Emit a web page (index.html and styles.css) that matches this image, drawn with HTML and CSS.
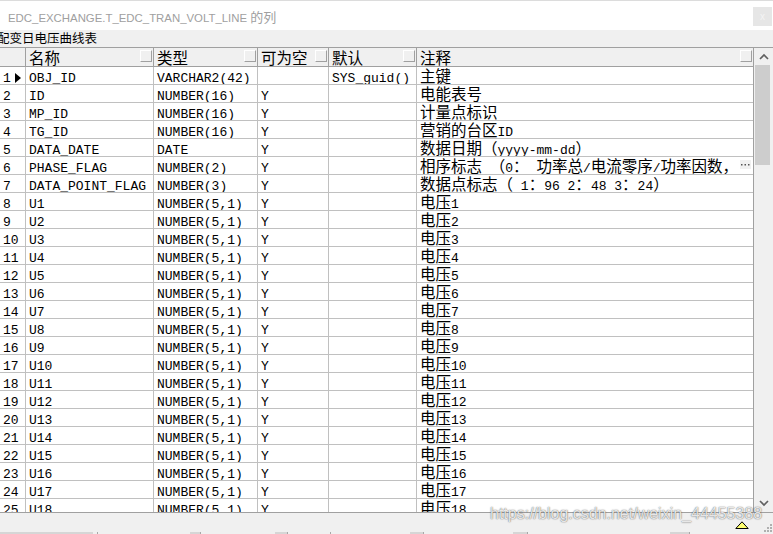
FILE: index.html
```html
<!DOCTYPE html>
<html>
<head>
<meta charset="utf-8">
<link rel="stylesheet" href="styles.css">
</head>
<body>
<div class="titlebar">
  <div class="title">EDC_EXCHANGE.T_EDC_TRAN_VOLT_LINE <span class="zh">的列</span></div>
  <div class="close">x</div>
</div>
<div class="caption">配变日电压曲线表</div>
<div class="gridwrap">
  <div class="table">
    <div class="h"></div>
    <div class="h"><span class="t">名称</span><span class="b"></span></div>
    <div class="h"><span class="t">类型</span><span class="b"></span></div>
    <div class="h"><span class="t">可为空</span><span class="b"></span></div>
    <div class="h"><span class="t">默认</span><span class="b"></span></div>
    <div class="h"><span class="t">注释</span><span class="b"></span></div>

    <div class="c n">1<svg class="cur" width="6" height="10" viewBox="0 0 6 10"><polygon points="0,0 6,5 0,10" fill="#000"/></svg></div><div class="c">OBJ_ID</div><div class="c">VARCHAR2(42)</div><div class="c"></div><div class="c">SYS_guid()</div><div class="c"><span class="z">主键</span></div>
    <div class="c n">2</div><div class="c">ID</div><div class="c">NUMBER(16)</div><div class="c">Y</div><div class="c"></div><div class="c"><span class="z">电能表号</span></div>
    <div class="c n">3</div><div class="c">MP_ID</div><div class="c">NUMBER(16)</div><div class="c">Y</div><div class="c"></div><div class="c"><span class="z">计量点标识</span></div>
    <div class="c n">4</div><div class="c">TG_ID</div><div class="c">NUMBER(16)</div><div class="c">Y</div><div class="c"></div><div class="c"><span class="z">营销的台区</span>ID</div>
    <div class="c n">5</div><div class="c">DATA_DATE</div><div class="c">DATE</div><div class="c">Y</div><div class="c"></div><div class="c"><span class="z">数据日期（</span>yyyy-mm-dd<span class="z">）</span></div>
    <div class="c n">6</div><div class="c">PHASE_FLAG</div><div class="c">NUMBER(2)</div><div class="c">Y</div><div class="c"></div><div class="c"><span class="z">相序标志　（</span>0<span class="z">：</span> <span class="z">功率总</span>/<span class="z">电流零序</span>/<span class="z">功率因数，</span><span class="more"><svg width="9" height="3" viewBox="0 0 9 3"><rect x="0" y="1" width="1.5" height="1.5" fill="#555"/><rect x="3.5" y="1" width="1.5" height="1.5" fill="#555"/><rect x="7" y="1" width="1.5" height="1.5" fill="#555"/></svg></span></div>
    <div class="c n">7</div><div class="c">DATA_POINT_FLAG</div><div class="c">NUMBER(3)</div><div class="c">Y</div><div class="c"></div><div class="c"><span class="z">数据点标志（</span> 1<span class="z">：</span>96 2<span class="z">：</span>48 3<span class="z">：</span>24<span class="z">）</span></div>
    <div class="c n">8</div><div class="c">U1</div><div class="c">NUMBER(5,1)</div><div class="c">Y</div><div class="c"></div><div class="c"><span class="z">电压</span>1</div>
    <div class="c n">9</div><div class="c">U2</div><div class="c">NUMBER(5,1)</div><div class="c">Y</div><div class="c"></div><div class="c"><span class="z">电压</span>2</div>
    <div class="c n">10</div><div class="c">U3</div><div class="c">NUMBER(5,1)</div><div class="c">Y</div><div class="c"></div><div class="c"><span class="z">电压</span>3</div>
    <div class="c n">11</div><div class="c">U4</div><div class="c">NUMBER(5,1)</div><div class="c">Y</div><div class="c"></div><div class="c"><span class="z">电压</span>4</div>
    <div class="c n">12</div><div class="c">U5</div><div class="c">NUMBER(5,1)</div><div class="c">Y</div><div class="c"></div><div class="c"><span class="z">电压</span>5</div>
    <div class="c n">13</div><div class="c">U6</div><div class="c">NUMBER(5,1)</div><div class="c">Y</div><div class="c"></div><div class="c"><span class="z">电压</span>6</div>
    <div class="c n">14</div><div class="c">U7</div><div class="c">NUMBER(5,1)</div><div class="c">Y</div><div class="c"></div><div class="c"><span class="z">电压</span>7</div>
    <div class="c n">15</div><div class="c">U8</div><div class="c">NUMBER(5,1)</div><div class="c">Y</div><div class="c"></div><div class="c"><span class="z">电压</span>8</div>
    <div class="c n">16</div><div class="c">U9</div><div class="c">NUMBER(5,1)</div><div class="c">Y</div><div class="c"></div><div class="c"><span class="z">电压</span>9</div>
    <div class="c n">17</div><div class="c">U10</div><div class="c">NUMBER(5,1)</div><div class="c">Y</div><div class="c"></div><div class="c"><span class="z">电压</span>10</div>
    <div class="c n">18</div><div class="c">U11</div><div class="c">NUMBER(5,1)</div><div class="c">Y</div><div class="c"></div><div class="c"><span class="z">电压</span>11</div>
    <div class="c n">19</div><div class="c">U12</div><div class="c">NUMBER(5,1)</div><div class="c">Y</div><div class="c"></div><div class="c"><span class="z">电压</span>12</div>
    <div class="c n">20</div><div class="c">U13</div><div class="c">NUMBER(5,1)</div><div class="c">Y</div><div class="c"></div><div class="c"><span class="z">电压</span>13</div>
    <div class="c n">21</div><div class="c">U14</div><div class="c">NUMBER(5,1)</div><div class="c">Y</div><div class="c"></div><div class="c"><span class="z">电压</span>14</div>
    <div class="c n">22</div><div class="c">U15</div><div class="c">NUMBER(5,1)</div><div class="c">Y</div><div class="c"></div><div class="c"><span class="z">电压</span>15</div>
    <div class="c n">23</div><div class="c">U16</div><div class="c">NUMBER(5,1)</div><div class="c">Y</div><div class="c"></div><div class="c"><span class="z">电压</span>16</div>
    <div class="c n">24</div><div class="c">U17</div><div class="c">NUMBER(5,1)</div><div class="c">Y</div><div class="c"></div><div class="c"><span class="z">电压</span>17</div>
    <div class="c n">25</div><div class="c">U18</div><div class="c">NUMBER(5,1)</div><div class="c">Y</div><div class="c"></div><div class="c"><span class="z">电压</span>18</div>
  </div>
  <div class="vscroll">
    <div class="arrow"><svg width="10" height="7" viewBox="0 0 10 7"><path d="M1 6 L5 2 L9 6" fill="none" stroke="#606060" stroke-width="1.7"/></svg></div>
    <div class="track"><div class="thumb"></div></div>
    <div class="arrow"><svg width="10" height="7" viewBox="0 0 10 7"><path d="M1 1 L5 5 L9 1" fill="none" stroke="#606060" stroke-width="1.7"/></svg></div>
  </div>
</div>
<div class="bottom">
  <div class="bar">
    <svg class="warn" width="14" height="8" viewBox="0 0 14 8"><polygon points="7,0.8 13.2,7.5 0.8,7.5" fill="#ffff70" stroke="#000" stroke-width="1"/></svg>
    <svg class="grip" width="9" height="9" viewBox="0 0 9 9"><rect x="7" y="1" width="2" height="2" fill="#b0b0b0"/><rect x="4" y="4" width="2" height="2" fill="#b0b0b0"/><rect x="7" y="4" width="2" height="2" fill="#b0b0b0"/><rect x="1" y="7" width="2" height="2" fill="#b0b0b0"/><rect x="4" y="7" width="2" height="2" fill="#b0b0b0"/><rect x="7" y="7" width="2" height="2" fill="#b0b0b0"/></svg>
  </div>
  <div class="strip"></div>
</div>
<div class="watermark">https://blog.csdn.net/weixin_44455388</div>
</body>
</html>
```
FILE: styles.css
```css
* { box-sizing: border-box; margin: 0; padding: 0; }
html, body { width: 773px; height: 534px; overflow: hidden; background: #f0f0f0; }
body { position: relative; font-family: "Liberation Mono", monospace; color: #000; }

.titlebar {
  height: 30px;
  background: #fff;
  border-top: 1px solid #dcdcdc;
  display: flex;
  align-items: center;
  justify-content: space-between;
  padding: 2px 1px 0 8px;
}
.title { font: 11.4px "Liberation Sans", "Noto Sans CJK SC", sans-serif; color: #a0a0a0; white-space: nowrap; }
.title .zh { font-family: "Noto Sans CJK SC", sans-serif; font-size: 13px; }
.close {
  width: 19px; height: 19px;
  background: #e6e6e6; color: #f4f4f4;
  font: 10px "Liberation Sans", sans-serif;
  display: flex; align-items: center; justify-content: center;
}

.caption {
  height: 17px;
  font: 12.5px/15px "Noto Sans CJK SC", sans-serif;
  margin-left: -3px;
  white-space: nowrap;
}

.gridwrap {
  display: flex;
  height: 466px;
  border-top: 1px solid #a0a0a0;
  border-bottom: 1px solid #a0a0a0;
  background: #fff;
}
.table {
  width: 753px;
  flex: none;
  display: grid;
  grid-template-columns: 26px 128px 104px 71px 88px 336px;
  grid-template-rows: 19px;
  grid-auto-rows: 18px;
  align-content: start;
  overflow: hidden;
}
.h {
  background: #f0f0f0;
  border-right: 1px solid #a0a0a0;
  border-bottom: 1px solid #a0a0a0;
  display: flex;
  justify-content: space-between;
  align-items: flex-start;
  padding-left: 3px;
}
.h:nth-child(6n) { border-right: 0; }
.h .t { font: 15.5px/18px "Noto Sans CJK SC", sans-serif; white-space: nowrap; }
.h .b {
  width: 12px; height: 12px;
  margin: 2px 1px 0 0;
  border: 1px solid;
  border-color: #fff #a0a0a0 #a0a0a0 #fff;
  background: #f0f0f0;
}

.c {
  position: relative;
  border-right: 1px solid #c0c0c0;
  border-bottom: 1px solid #c0c0c0;
  padding: 5px 0 0 3px;
  font-size: 13px;
  line-height: 14px;
  white-space: pre;
  overflow: hidden;
}
.c:nth-child(6n) { border-right: 0; }
.z {
  font-family: "Noto Sans CJK SC", sans-serif;
  font-size: 15.5px;
  line-height: 0;
}
.cur { margin-left: 4px; vertical-align: -1px; }
.more {
  position: absolute;
  right: 2px; top: 3px;
  width: 11px; height: 9px;
  background: #f0f0f0;
  display: flex; align-items: center; justify-content: center;
}

.vscroll {
  width: 20px;
  border-left: 1px solid #a0a0a0;
  background: #f0f0f0;
  display: flex;
  flex-direction: column;
}
.arrow { height: 17px; display: flex; align-items: center; justify-content: center; }
.track { flex: 1; padding-left: 1px; }
.thumb { width: 15px; height: 100px; background: #cdcdcd; }

.bottom { height: 21px; display: flex; flex-direction: column; }
.bar { flex: 1; display: flex; justify-content: flex-end; align-items: flex-start; padding-right: 1px; }
.warn { margin-top: 8px; margin-right: 14px; }
.grip { margin-top: 10px; }
.strip {
  height: 3px;
  background: linear-gradient(to right,
    #d6d6d6 0 93px, #f0f0f0 93px 97px, #a8a8a8 97px 98px, #f0f0f0 98px 190px,
    #d6d6d6 190px 200px, #a8a8a8 200px 201px, #f0f0f0 201px 275px,
    #d6d6d6 275px 287px, #a8a8a8 287px 288px, #f0f0f0 288px 330px,
    #a8a8a8 330px 331px, #f0f0f0 331px 410px, #d6d6d6 410px 423px,
    #a8a8a8 423px 424px, #f0f0f0 424px 513px, #d6d6d6 513px 527px,
    #a8a8a8 527px 528px, #f0f0f0 528px 670px, #d6d6d6 670px 689px,
    #a8a8a8 689px 690px, #f0f0f0 690px);
}

.watermark {
  position: absolute;
  left: 490px; top: 505px;
  font: 16px/18px "Liberation Sans", sans-serif;
  color: rgba(255, 255, 255, 0.85);
  text-shadow: 0 0 1px rgba(0, 0, 0, 0.6), 0 0 2px rgba(0, 0, 0, 0.25);
  white-space: nowrap;
}
```
